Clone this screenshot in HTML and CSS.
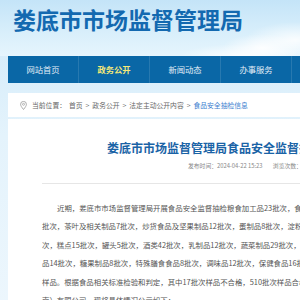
FILE: index.html
```html
<!DOCTYPE html>
<html lang="zh-CN">
<head>
    <meta charset="UTF-8">
    <meta name="viewport" content="width=device-width, initial-scale=1.0">
    <title>娄底市市场监督管理局</title>
    <link rel="stylesheet" href="styles.css">
</head>
<body>
    <div class="header">
        <div class="logo">娄底市市场监督管理局</div>
    </div>
    <div class="wrap">
        <div class="nav">
            <a href="#">网站首页</a>
            <a href="#" class="active">政务公开</a>
            <a href="#">新闻动态</a>
            <a href="#">办事服务</a>
            <a href="#">互动交流</a>
        </div>
        <div class="crumb">
            <svg class="pin" width="7" height="9" viewBox="0 0 7 9">
                <path d="M3.5 8.5 C1.5 6 0.6 4.6 0.6 3.3 A2.9 2.9 0 0 1 6.4 3.3 C6.4 4.6 5.5 6 3.5 8.5 Z" fill="none" stroke="#999" stroke-width="0.8"/>
                <circle cx="3.5" cy="3.3" r="1" fill="none" stroke="#999" stroke-width="0.7"/>
            </svg>
            <span>当前位置：</span>
            <a href="#">首页</a><i>&gt;</i>
            <a href="#">政务公开</a><i>&gt;</i>
            <a href="#">法定主动公开内容</a><i>&gt;</i>
            <a href="#" class="current">食品安全抽检信息</a>
        </div>
        <div class="article">
            <h1 class="title">娄底市市场监督管理局食品安全监督抽检信息公告（2024年第4期）</h1>
            <div class="meta">
                <span>发布时间：2024-04-22 15:23</span>
                <span>浏览次数：</span>
            </div>
            <div class="content">
                <p>近期，娄底市市场监督管理局开展食品安全监督抽检粮食加工品23批次，食用油、油脂及其制品13<br>批次，茶叶及相关制品7批次，炒货食品及坚果制品12批次，蛋制品8批次，淀粉及淀粉制品6批<br>次，糕点15批次，罐头5批次，酒类42批次，乳制品12批次，蔬菜制品29批次，薯类和膨化食<br>品14批次，糖果制品8批次，特殊膳食食品8批次，调味品12批次，保健食品16批次等共527批次<br>样品。根据食品相关标准检验和判定，其中17批次样品不合格，510批次样品合格。抽检工作委托谱尼测试集团（湖<br>南）有限公司。现将具体情况公示如下：</p>
            </div>
        </div>
    </div>
</body>
</html>
```

FILE: styles.css
```css
body {
    margin: 0;
    font-family: "Noto Sans CJK SC", "Noto Sans", sans-serif;
    background: linear-gradient(180deg, #cfe9f9 0%, #e4f3fc 40%, #eef7fd 100%);
    overflow: hidden;
}
.header {
    height: 56px;
    padding-left: 13px;
    background:
        radial-gradient(ellipse 40px 14px at 262px 48px, rgba(255, 255, 255, 0.9), rgba(255, 255, 255, 0)),
        radial-gradient(ellipse 50px 18px at 295px 40px, rgba(255, 255, 255, 0.85), rgba(255, 255, 255, 0)),
        radial-gradient(ellipse 60px 12px at 240px 56px, rgba(255, 255, 255, 0.8), rgba(255, 255, 255, 0)),
        linear-gradient(180deg, #c4e4f8 0%, #d9effb 60%, #e6f5fd 100%);
}
.logo {
    padding-top: 4px;
    font-size: 23px;
    font-weight: 700;
    line-height: 30px;
    color: #1369b0;
}
.wrap {
    margin-left: 8px;
    width: 600px;
}
.nav {
    display: flex;
    height: 27px;
    background: #0a67a6;
}
.nav a {
    width: 70px;
    border-right: 1px solid rgba(255, 255, 255, 0.12);
    text-align: center;
    line-height: 27px;
    font-size: 8.3px;
    color: #e3eef7;
    text-decoration: none;
}
.nav a.active {
    color: #f7e978;
    font-weight: 700;
}
.crumb {
    display: flex;
    align-items: center;
    margin-top: 10px;
    height: 24px;
    padding-left: 12px;
    background: #fff;
    font-size: 6.8px;
    color: #666;
}
.crumb .pin {
    margin-right: 5px;
}
.crumb a {
    color: #666;
    text-decoration: none;
}
.crumb span {
    margin-right: 3px;
}
.crumb i {
    font-style: normal;
    margin: 0 3px;
}
.crumb a.current {
    color: #3d80cf;
}
.article {
    margin-top: 2px;
    background: #fff;
    padding: 20px 0 0 34px;
    height: 200px;
}
.title {
    margin: 0 0 0 65px;
    font-size: 12px;
    line-height: 18px;
    font-weight: 700;
    color: #1a63a6;
    white-space: nowrap;
}
.meta {
    margin: 4px 0 0 146px;
    padding-bottom: 13px;
    font-size: 5.8px;
    color: #888;
    white-space: nowrap;
}
.meta span {
    margin-right: 9px;
}
.content {
    border-top: 1px solid #e6e6e6;
}
.content p {
    margin: 15px 0 0;
    text-indent: 15px;
    font-size: 7.4px;
    line-height: 18.4px;
    color: #555;
    white-space: nowrap;
}
```
